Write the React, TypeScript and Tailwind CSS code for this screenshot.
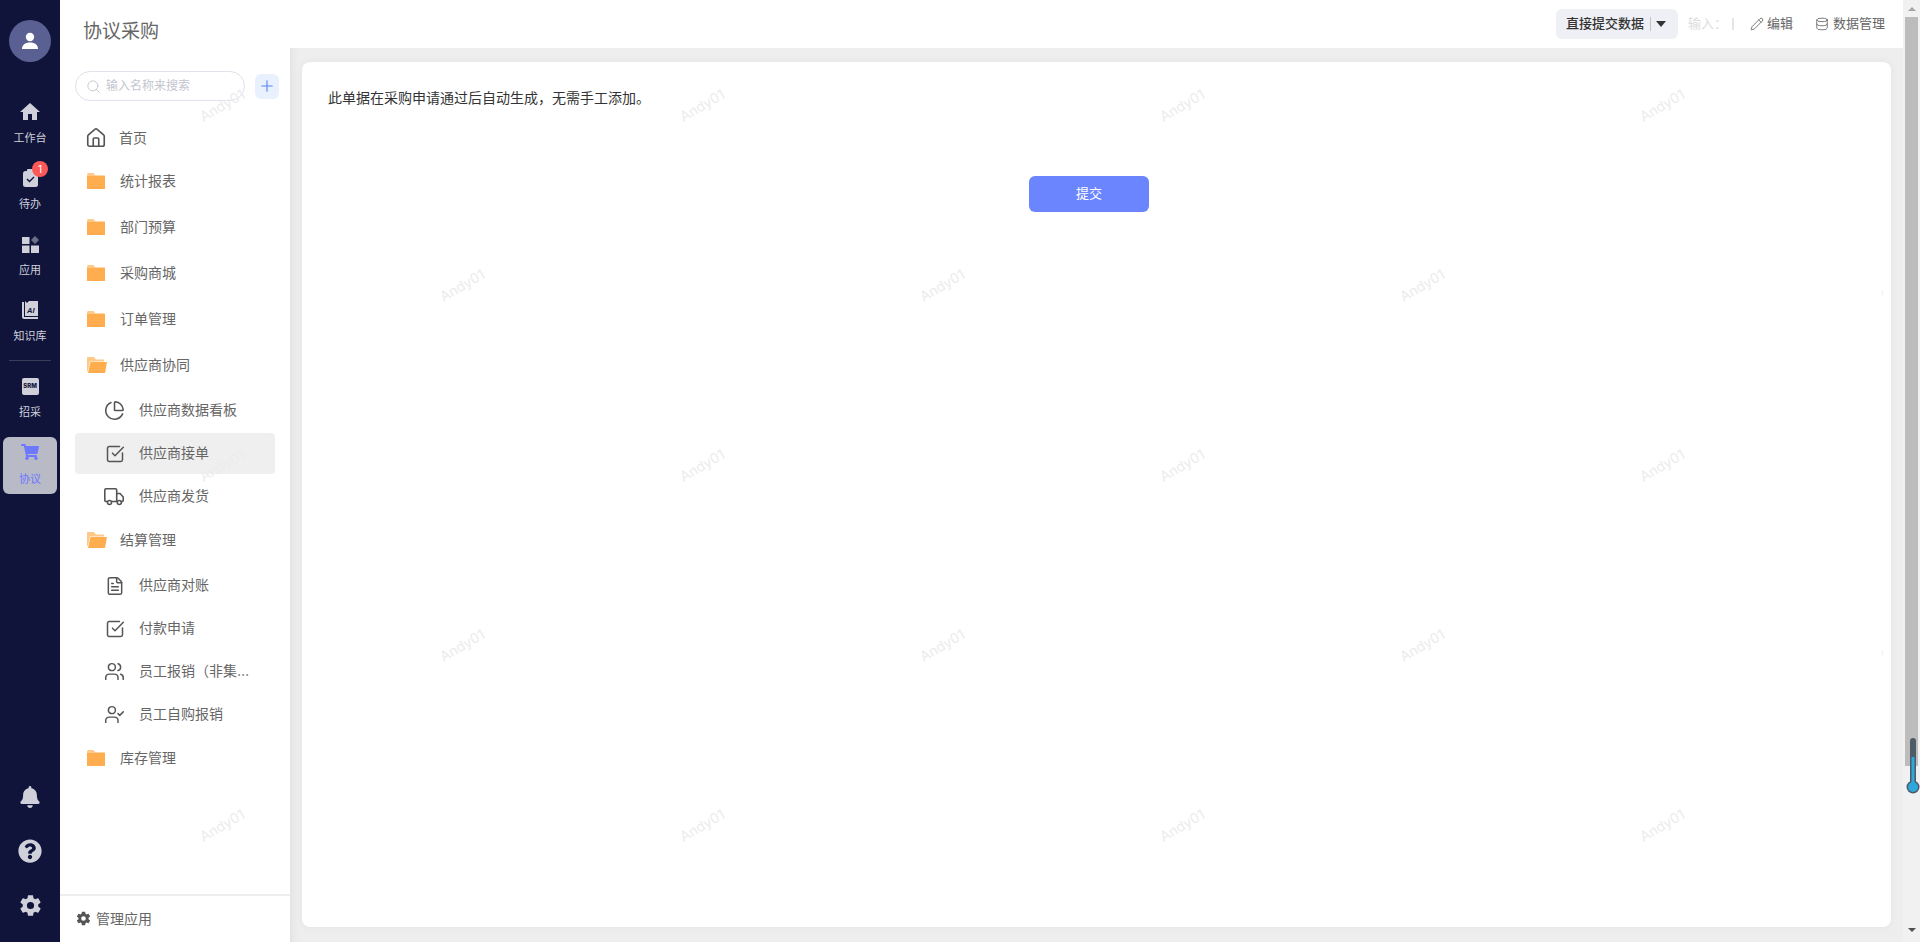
import { ChartPie, Database, FileText, House, Pencil, Plus, Search, SquareCheckBig, UserCheck, Users } from 'lucide-react'
import { FaBell, FaQuestionCircle, FaShoppingCart } from 'react-icons/fa'
import { IoSettingsSharp } from 'react-icons/io5'
import { MdHome } from 'react-icons/md'
import type { ReactNode } from 'react'

const font = 'font-["Inter","Noto_Sans_CJK_SC",sans-serif]'

function FolderClosed() {
  return (
    <svg width="18" height="16" viewBox="0 0 18 16" className="shrink-0">
      <path d="M0 1.5C0 .7.7 0 1.500 0h5l2 2.500H0z" fill="#ffc98a" />
      <rect x="0" y="2.500" width="18" height="13.500" rx="0.5" fill="#ffad4f" />
    </svg>
  )
}

function FolderOpen() {
  return (
    <svg width="20" height="16" viewBox="0 0 20 16" className="shrink-0">
      <path d="M0 1C0 .4.400 0 1 0h6l2 2.500h8v2H3L1 14H0z" fill="#ffc98a" />
      <path d="M3.500 5H20l-2 11H1z" fill="#ffad4f" />
    </svg>
  )
}

function TruckIcon() {
  return (
    <svg width="20" height="18" viewBox="0 0 20 18" fill="none" stroke="currentColor" strokeWidth="1.600" className="ml-[-1px]">
      <path d="M3.500 13.500H2a1.200 1.200 0 0 1-1.200-1.200V2A1.200 1.200 0 0 1 2 .8h9.500A1.200 1.200 0 0 1 12.700 2v11.500H7.500" />
      <path d="M12.700 5.500h3.300l3.200 3.500v3.300a1.200 1.200 0 0 1-1.200 1.200h-1M12.700 13.500h.6" />
      <circle cx="5.500" cy="14.500" r="2" />
      <circle cx="15.300" cy="14.500" r="2" />
    </svg>
  )
}

function RailItem({ icon, label, active, badge }: { icon: ReactNode; label: string; active?: boolean; badge?: string }) {
  return (
    <div className={`relative flex h-[57px] w-[54px] flex-col items-center justify-start rounded-md pt-[2px] ${active ? 'bg-[#b8bac6] text-[#6d78ff]' : 'text-[#cfd0da]'}`}>
      <div className="flex h-[26px] w-[26px] items-center justify-center">{icon}</div>
      <span className={`text-[11px] leading-[18px] ${active ? 'mt-[5px]' : 'mt-[4px]'}`}>{label}</span>
      {badge && (
        <span className="absolute left-[29px] top-[-2px] flex h-4 w-4 items-center justify-center rounded-full bg-[#fb5858] text-[10px] leading-none text-white">
          {badge}
        </span>
      )}
    </div>
  )
}

function Rail() {
  return (
    <div className="flex w-[60px] shrink-0 flex-col items-center bg-[#10143a]">
      <div className="mt-5 flex h-[42px] w-[42px] items-center justify-center rounded-full bg-[#5a6192]">
        <svg width="18" height="18" viewBox="0 0 18 18" fill="#fff">
          <circle cx="9" cy="5" r="4.200" />
          <path d="M1 17c0-4 3-6.500 8-6.500s8 2.500 8 6.500z" />
        </svg>
      </div>
      <div className="mt-[35px] flex flex-col items-center gap-[9px]">
        <RailItem label="工作台" icon={<MdHome size={24} />} />
        <RailItem
          label="待办"
          badge="1"
          icon={
            <svg width="15" height="18" viewBox="0 0 15 18">
              <rect x="0" y="2" width="15" height="16" rx="2.500" fill="#cfd0da" />
              <rect x="4" y="0" width="7" height="4" rx="1" fill="#cfd0da" />
              <path d="M4 10l2.500 2.500 4.500-4.500" fill="none" stroke="#10143a" strokeWidth="1.400" />
            </svg>
          }
        />
        <RailItem
          label="应用"
          icon={
            <svg width="17" height="17" viewBox="0 0 17 17" fill="#cfd0da">
              <rect x="0" y="1" width="7.500" height="7" />
              <rect x="0" y="9.500" width="7.500" height="7.500" />
              <rect x="9" y="9.500" width="8" height="7.500" />
              <path d="M13 0l4 4-4 4-4-4z" fill="#6b6e87" />
            </svg>
          }
        />
        <RailItem
          label="知识库"
          icon={
            <svg width="16" height="18" viewBox="0 0 16 18" fill="#cfd0da">
              <path d="M0 1h2v15h14v2H2a2 2 0 0 1-2-2zM3 0l2 2 2-2h9v15H3z" />
              <text x="5" y="12" fontSize="7.500" fontWeight="800" fontStyle="italic" fill="#10143a" fontFamily="Liberation Sans">AI</text>
            </svg>
          }
        />
      </div>
      <div className="mt-[8px] h-px w-[42px] bg-[#3a3d5c]" />
      <div className="mt-[10px] flex flex-col items-center gap-[9px]">
        <RailItem
          label="招采"
          icon={
            <div className="flex h-[17px] w-[17px] items-center justify-center rounded-[2px] bg-[#cfd0da] text-[6px] font-extrabold leading-none text-[#10143a]">SRM</div>
          }
        />
        <RailItem label="协议" active icon={<FaShoppingCart size={18} />} />
      </div>
      <div className="mt-auto mb-[25px] flex flex-col items-center gap-[31px] text-[#cfd0da]">
        <FaBell size={22} />
        <FaQuestionCircle size={24} />
        <IoSettingsSharp size={23} />
      </div>
    </div>
  )
}

function Folder({ label, open }: { label: string; open?: boolean }) {
  return (
    <div className="flex h-[46px] items-center pl-3 text-[14px] text-[#666]">
      <div className="w-[33px]">{open ? <FolderOpen /> : <FolderClosed />}</div>
      <span className="pb-[2px]">{label}</span>
    </div>
  )
}

function SubItem({ label, icon, active }: { label: string; icon: ReactNode; active?: boolean }) {
  return (
    <div className={`flex h-[41px] w-[200px] items-center rounded pl-[30px] pr-6 text-[14px] text-[#666] ${active ? 'bg-[#efefef]' : ''}`}>
      <div className="flex w-[34px] shrink-0 text-[#555]">{icon}</div>
      <span className="truncate pb-[2px]">{label}</span>
    </div>
  )
}

function Sidebar() {
  return (
    <div className="relative flex w-[230px] shrink-0 flex-col bg-white">
      <div className="pl-[23px] pt-[18px] text-[19px] leading-[28px] text-[#666]">协议采购</div>
      <div className="mt-[25px] flex items-center pl-[15px]">
        <div className="flex h-[30px] w-[170px] items-center rounded-full border border-[#dfe1ec] pl-[10px] text-[12px] text-[#c4c6cf]">
          <Search size={15} strokeWidth={1.500} />
          <span className="ml-[5px]">输入名称来搜索</span>
        </div>
        <div className="ml-[10px] flex h-[25px] w-[24px] items-center justify-center rounded-md bg-[#e9f1ff] text-[#5b84f5]">
          <Plus size={18} strokeWidth={1.500} />
        </div>
      </div>
      <div className="mt-[16px] flex flex-col pl-[15px]">
        <div className="flex h-[41px] items-center pl-[10px] text-[14px] text-[#666]">
          <House size={22} strokeWidth={1.800} className="mr-[12px] text-[#555]" />
          首页
        </div>
        <Folder label="统计报表" />
        <Folder label="部门预算" />
        <Folder label="采购商城" />
        <Folder label="订单管理" />
        <Folder label="供应商协同" open />
        <div className="mt-[2px] flex flex-col gap-[2px]">
          <SubItem label="供应商数据看板" icon={<ChartPie size={21} strokeWidth={1.800} className="ml-[-1px]" />} />
          <SubItem label="供应商接单" active icon={<SquareCheckBig size={20} strokeWidth={1.800} />} />
          <SubItem label="供应商发货" icon={<TruckIcon />} />
        </div>
        <Folder label="结算管理" open />
        <div className="mt-[2px] flex flex-col gap-[2px]">
          <SubItem label="供应商对账" icon={<FileText size={20} strokeWidth={1.800} />} />
          <SubItem label="付款申请" icon={<SquareCheckBig size={20} strokeWidth={1.800} />} />
          <SubItem label="员工报销（非集中报销）" icon={<Users size={21} strokeWidth={1.700} className="ml-[-1px]" />} />
          <SubItem label="员工自购报销" icon={<UserCheck size={21} strokeWidth={1.700} className="ml-[-1px]" />} />
        </div>
        <Folder label="库存管理" />
      </div>
      <div className="mt-auto flex h-[48px] items-center border-t-2 border-[#eee] pb-[2px] pl-4 text-[14px] text-[#666]">
        <IoSettingsSharp size={15} className="mr-[5px] text-[#555]" />
        管理应用
      </div>
    </div>
  )
}

function Header() {
  return (
    <div className="flex h-12 shrink-0 items-center justify-end bg-white pr-[18px] text-[13px] text-[#666]">
      <div className="flex h-[30px] items-center rounded-md bg-[#eef0f5] pl-[10px] pr-[12px] font-medium text-[#333]">
        直接提交数据
        <span className="ml-[6px] h-[14px] w-px bg-[#c4c4c4]" />
        <span className="ml-[5px] h-0 w-0 border-x-[5px] border-t-[6px] border-x-transparent border-t-[#333]" />
      </div>
      <span className="ml-[10px] text-[#ddd]">输入：</span>
      <span className="ml-[5px] h-[12px] w-[2px] bg-[#e5e5e5]" />
      <Pencil size={14} strokeWidth={1.300} className="ml-[16px] text-[#555]" />
      <span className="ml-[3px]">编辑</span>
      <Database size={14} strokeWidth={1.300} className="ml-[22px] text-[#555]" />
      <span className="ml-[4px]">数据管理</span>
    </div>
  )
}

function Scrollbar() {
  return (
    <div className="flex w-[17px] shrink-0 flex-col items-center bg-[#f1f1f1]">
      <div className="flex h-[17px] items-center">
        <span className="h-0 w-0 border-x-[4px] border-b-[4px] border-x-transparent border-b-[#a3a3a3]" />
      </div>
      <div className="h-[749px] w-[13px] bg-[#bcbcbc]" />
      <div className="mt-auto flex h-[24px] items-center">
        <span className="h-0 w-0 border-x-[4px] border-t-[4px] border-x-transparent border-t-[#505050]" />
      </div>
    </div>
  )
}

// watermark grid, staggered rows
const marks: [number, number][] = []
for (let r = 0; r < 5; r++) {
  for (let c = 0; c < 4; c++) {
    marks.push([(r % 2 ? 462 : 222) + c * 480, 105 + r * 180])
  }
}

export default function App() {
  return (
    <div className={`relative flex h-[942px] w-[1920px] overflow-hidden bg-[#eee] ${font}`}>
      <Rail />
      <Sidebar />
      <div className="flex min-w-0 flex-1 flex-col shadow-[inset_8px_0_8px_-6px_rgba(0,0,0,0.06)]">
        <Header />
        <div className="flex-1 px-3 pb-[15px] pt-[14px]">
          <div className="h-full rounded-lg bg-white pl-[26px] pr-[41px] pt-[26px] text-[14px] text-[#333] shadow-[0_0_10px_rgba(0,0,0,0.05)]">
            <p className="leading-5">此单据在采购申请通过后自动生成，无需手工添加。</p>
            <div className="mt-[68px] flex justify-center">
              <button className="h-9 w-[120px] rounded-md bg-[#6b85ff] text-[13px] text-white">提交</button>
            </div>
          </div>
        </div>
      </div>
      <Scrollbar />
      {/* thermometer widget floating over the scrollbar */}
      <svg width="14" height="58" viewBox="0 0 14 58" className="absolute left-[1906px] top-[737px]">
        <rect x="4" y="1" width="6" height="46" rx="3" fill="#4d5b67" />
        <circle cx="7" cy="50" r="6.500" fill="#4d5b67" />
        <rect x="5.500" y="20" width="3" height="28" fill="#2ea7dc" />
        <circle cx="7" cy="50" r="5" fill="#2ea7dc" />
      </svg>
      <div className="pointer-events-none absolute inset-y-0 left-0 w-[1883px] overflow-hidden">
        {marks.map(([x, y]) => (
          <span
            key={`${x}-${y}`}
            style={{ left: x, top: y }}
            className="absolute -translate-x-1/2 -translate-y-1/2 -rotate-[30deg] text-[14px] text-[#ececec]"
          >
            Andy01
          </span>
        ))}
      </div>
    </div>
  )
}
